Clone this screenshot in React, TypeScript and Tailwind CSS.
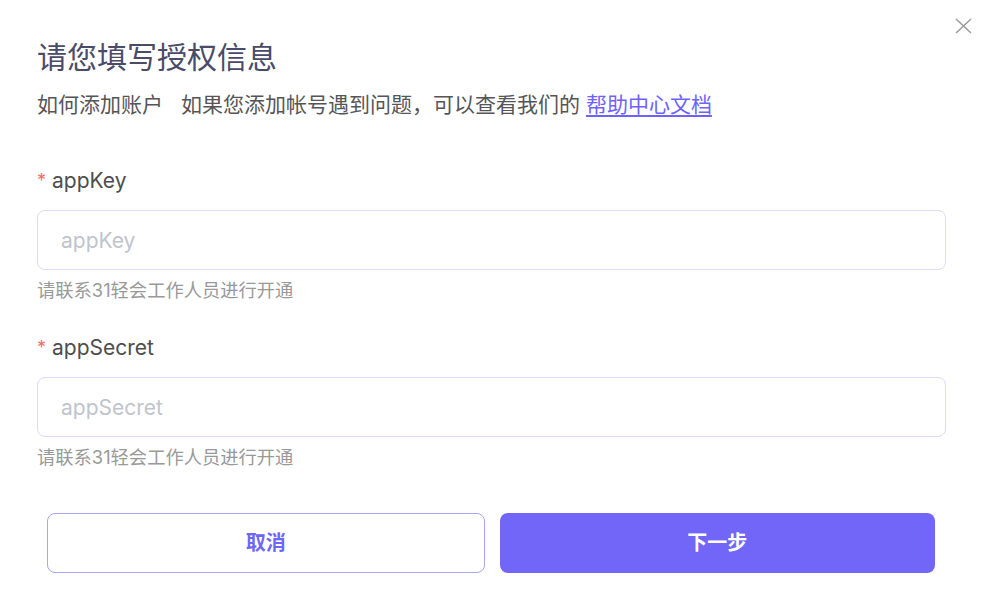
const FONT = 'font-["Inter","Noto_Sans_CJK_SC",sans-serif]';

const Field = ({ label, placeholder }: { label: string; placeholder: string }) => (
  <div className="flex flex-col">
    <label className="flex h-[28px] items-center text-[21px] leading-[28px] text-[#4d4d4f]">
      <span className="mr-[6px] text-[18px] text-[#f56c6c]">*</span>
      {label}
    </label>
    <input
      placeholder={placeholder}
      className="mt-[15px] h-[60px] w-full rounded-[8px] border border-[#ddd9f9] bg-white px-[23px] text-[21px] text-[#333] outline-none placeholder:text-[#c0c4cc]"
    />
    <p className="mt-[8px] text-[18.3px] leading-[24px] text-[#999999]">
      请联系31轻会工作人员进行开通
    </p>
  </div>
);

export default function App() {
  return (
    <div className={`relative h-[601px] w-[997px] bg-white ${FONT}`}>
      <button className="absolute left-[955px] top-[18px] text-[#9a9a9a]" aria-label="关闭">
        <svg width="17" height="16" viewBox="0 0 17 16" fill="none" stroke="currentColor" strokeWidth="1.5">
          <path d="M1 1 L16 15 M16 1 L1 15" />
        </svg>
      </button>

      <div className="flex flex-col pl-[37px] pr-[51px] pt-[37px]">
        <h2 className="text-[30px] leading-[40px] text-[#4a4b68]">请您填写授权信息</h2>
        <p className="mt-[14px] text-[21px] leading-[28px] text-[#555558]">
          <span className="mr-[18px]">如何添加账户</span>
          如果您添加帐号遇到问题，可以查看我们的{' '}
          <a href="#" className="text-[#6c63ff] underline underline-offset-[3px]">
            帮助中心文档
          </a>
        </p>

        <div className="mt-[48px] flex flex-col gap-[32px]">
          <Field label="appKey" placeholder="appKey" />
          <Field label="appSecret" placeholder="appSecret" />
        </div>

        <div className="mt-[44px] flex gap-[15px] pl-[10px] pr-[11px]">
          <button className="h-[60px] flex-1 rounded-[8px] border border-[#aaa4fb] bg-white text-[20px] font-bold text-[#6e66f6]">
            取消
          </button>
          <button className="h-[60px] flex-1 rounded-[8px] bg-[#7166f8] text-[20px] font-bold text-white">
            下一步
          </button>
        </div>
      </div>
    </div>
  );
}
